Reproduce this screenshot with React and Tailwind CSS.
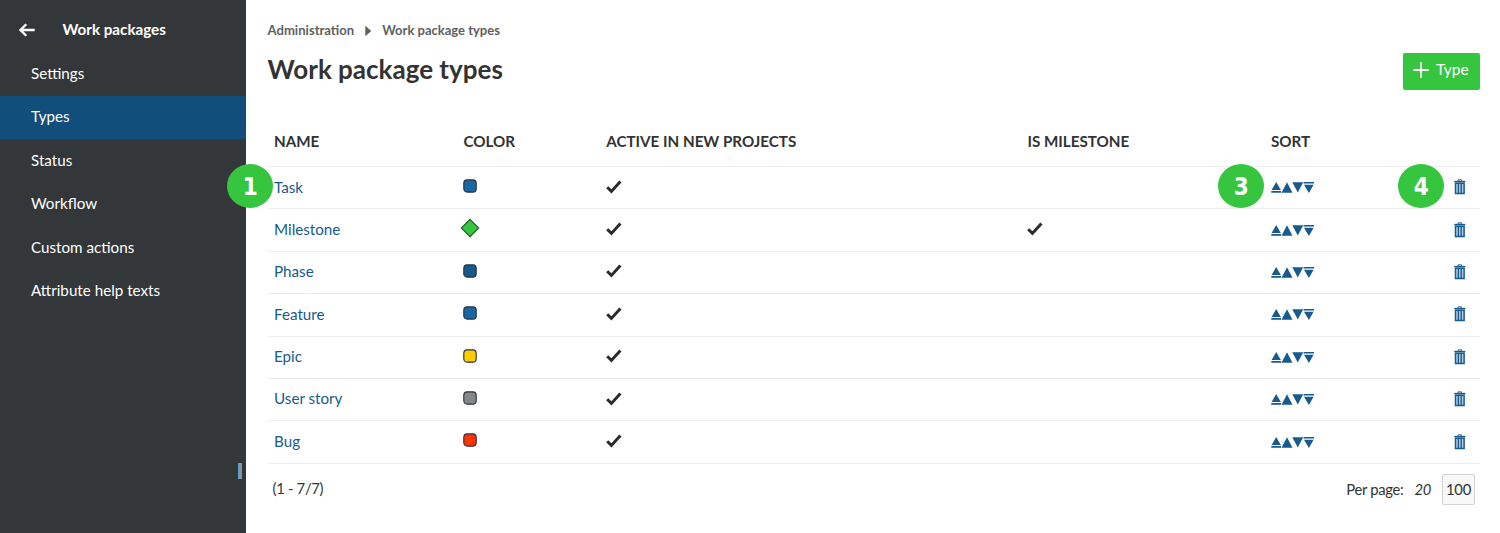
import React from "react";

const NAV = ["Settings", "Types", "Status", "Workflow", "Custom actions", "Attribute help texts"];

const TYPES = [
  { name: "Task", fill: "#1a67a3", from: "1", sort: "3", del: "4" },
  { name: "Milestone", fill: "#35c53f", milestone: true },
  { name: "Phase", fill: "#175a8e" },
  { name: "Feature", fill: "#1a67a3" },
  { name: "Epic", fill: "#ffcc00" },
  { name: "User story", fill: "#878787" },
  { name: "Bug", fill: "#ff3300" },
];

const GRID = "grid grid-cols-[189.5px_142.7px_421.2px_243.5px_1fr_20px] pr-[5px]";

function Swatch({ fill, milestone }) {
  return milestone ? (
    <svg className="-ml-[3px] block" width="20" height="20" viewBox="0 0 20 20">
      <path d="M10 1.3 18.7 10 10 18.7 1.3 10Z" fill={fill} stroke="#1c5a2a" strokeWidth="1.1" />
    </svg>
  ) : (
    <svg className="-ml-[3px] block" width="20" height="20" viewBox="0 0 20 20">
      <rect x="3.8" y="3.9" width="12.4" height="12.2" rx="3.4" fill={fill} stroke="#222f3a" strokeWidth="1.1" />
    </svg>
  );
}

function Check() {
  return (
    <svg className="block" width="16" height="14" viewBox="0 0 16 14">
      <path d="M1.2 7.3 5.4 11.4 14.4 1.5" fill="none" stroke="#2b2b2b" strokeWidth="3" />
    </svg>
  );
}

function SortIcons() {
  return (
    <svg className="block" width="44" height="12" viewBox="0 0 44 12" fill="#175a8e">
      <path d="M5.2 0 9.8 8H.6ZM.3 9H10.1V10.8H.3Z" />
      <path d="M16 .3 21.5 10.7H10.5Z" />
      <path d="M21.3.3H32.2L26.8 10.4Z" />
      <path d="M32.6 0H43V1.6H32.6ZM33 2.8H42.6L37.9 11Z" />
    </svg>
  );
}

function Trash() {
  return (
    <svg className="block" width="12" height="16" viewBox="0 0 12 16" fill="none" stroke="#175a8e">
      <path d="M.3 2.6H11.3" strokeWidth="1.5" />
      <path d="M4 1.8V.9H7.5V1.8" strokeWidth="1" />
      <path d="M1.5 4.2V14.6H10.1V4.2Z" strokeWidth="1.5" fill="#b9cfe0" />
      <path d="M4.4 4V14.4M7.2 4V14.4" strokeWidth="1.4" />
    </svg>
  );
}

function Badge({ children, className }) {
  return (
    <span className={`absolute top-[-3px] z-10 flex h-11 w-[46px] items-center justify-center rounded-[50%] bg-[#35c53f] pt-[2px] font-['DejaVu_Sans',sans-serif] text-2xl font-bold text-white ${className}`}>
      <span className="scale-x-90">{children}</span>
    </span>
  );
}

export default function App() {
  return (
    <div className="flex h-[533px] w-[1500px] overflow-hidden bg-white font-['Lato',sans-serif] text-[15.2px] text-[#333333]">
      <aside className="relative w-[245.5px] shrink-0 bg-[#333739] text-white">
        <div className="flex h-[52.5px] items-center pt-[7px] pl-[19px]">
          <svg width="16" height="14" viewBox="0 0 16 14" fill="none" stroke="#fff" strokeWidth="2.3">
            <path d="M1.5 7H15.7M7.3 1.2 1.5 7 7.3 12.8" />
          </svg>
          <span className="ml-[27.5px] font-bold">Work packages</span>
        </div>
        <nav>
          {NAV.map((n) => (
            <div key={n} className={`flex h-[43.45px] items-center pb-[1.6px] pl-[31px] ${n === "Types" ? "bg-[#124e7c]" : ""}`}>
              {n}
            </div>
          ))}
        </nav>
        <div className="absolute top-[463px] left-[238px] h-4 w-1 border-x border-[#5f9cc4] bg-[#8d9499]" />
      </aside>

      <main className="flex flex-1 flex-col pr-5 pl-[22px]">
        <div className="mt-5 flex h-[21px] items-center text-[13.1px] font-bold text-[#5f5f5f]">
          <span>Administration</span>
          <svg className="mr-[10px] ml-[11px]" width="7" height="12" viewBox="0 0 7 12">
            <path d="M.3.8 6.3 6 .3 11.2Z" fill="#5f5f5f" />
          </svg>
          <span className="text-[13px]">Work package types</span>
        </div>
        <div className="mt-3 flex h-[37px] items-start justify-between">
          <h1 className="-mt-px text-[26px] leading-[34px] font-bold">Work package types</h1>
          <button className="flex h-[37px] w-[77px] items-center rounded-[2px] bg-[#35c53f] pb-[3px] pl-[10px] text-[15.5px] text-white">
            <svg width="16" height="16" viewBox="0 0 16 16" stroke="#fff" strokeWidth="1.8">
              <path d="M8 .3V15.7M.3 8H15.7" />
            </svg>
            <span className="ml-[7px]">Type</span>
          </button>
        </div>

        <div className={`${GRID} mt-[28px] h-[48px] pt-[11.5px] pl-[6.5px] text-[15.2px] leading-[22px] font-bold`}>
          <span>NAME</span>
          <span>COLOR</span>
          <span>ACTIVE IN NEW PROJECTS</span>
          <span>IS MILESTONE</span>
          <span>SORT</span>
        </div>
        <div className="border-b border-[#ededed]">
          {TYPES.map((t) => (
            <div key={t.name} className={`${GRID} relative h-[42.4px] items-center border-t border-[#ededed] pl-[6.5px]`}>
              <span className="pb-[1.6px] text-[#175a8e]">{t.name}</span>
              <div className="-mt-[3.5px] -ml-[1px] pl-[0.5px]"><Swatch {...t} /></div>
              <div className="-mt-[2px]"><Check /></div>
              <div className="-mt-[2px]">{t.milestone && <Check />}</div>
              <div className="pt-px"><SortIcons /></div>
              <div className="-mt-px ml-[-1px]"><Trash /></div>
              {t.from && <Badge className="left-[-40.5px]">{t.from}</Badge>}
              {t.sort && <Badge className="left-[950.5px]">{t.sort}</Badge>}
              {t.del && <Badge className="left-[1130.5px]">{t.del}</Badge>}
            </div>
          ))}
        </div>

        <div className="flex h-[50px] items-center justify-between pr-[5px] pl-[5px] text-[14.8px] tracking-[-0.3px]">
          <span className="pb-px">(1 - 7/7)</span>
          <div className="flex items-center pt-px">
            <span className="pb-px">Per page:</span>
            <span className="ml-[11px] pb-px italic">20</span>
            <span className="ml-[11px] flex h-[31px] w-[33px] items-center justify-center rounded-[2px] border border-[#d2d2d2] bg-[#f8f8f8] pb-px">100</span>
          </div>
        </div>
      </main>
    </div>
  );
}
